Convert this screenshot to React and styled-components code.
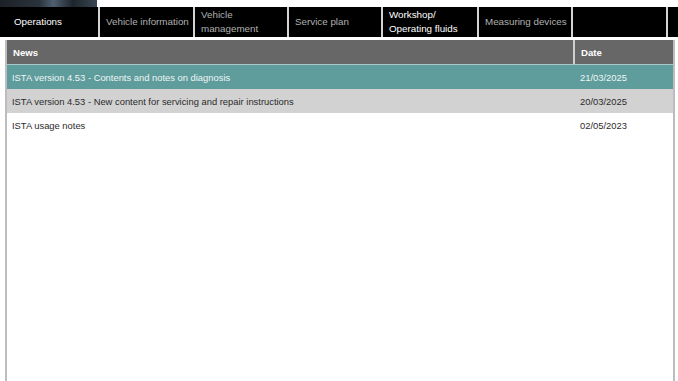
import React from 'react';
import styled, { createGlobalStyle } from 'styled-components';

const GlobalStyle = createGlobalStyle`
    html, body {
        margin: 0;
        padding: 0;
        background: #ffffff;
        font-family: 'Liberation Sans', Arial, sans-serif;
    }
`;

const Page = styled.div`
    width: 678px;
    height: 381px;
    overflow: hidden;
    background: #fff;
`;

const Banner = styled.div`
    height: 7px;
    display: flex;
`;

const BannerImage = styled.div`
    width: 97px;
    background: linear-gradient(90deg, #1c2127 0%, #2a323b 40%, #4f5f70 55%, #1e252c 75%, #3b4652 100%);
`;

const TabBar = styled.div`
    display: flex;
    height: 30px;
    background: #000;
`;

const Tab = styled.div`
    box-sizing: border-box;
    width: ${p => p.$w}px;
    flex: ${p => (p.$w ? 'none' : '1')};
    border-right: ${p => (p.$last ? 'none' : '2px solid #d4d4d4')};
    padding-left: ${p => p.$pad || 6}px;
    display: flex;
    align-items: center;
    font-size: 9.8px;
    line-height: 14px;
    white-space: nowrap;
    overflow: hidden;
    color: ${p => (p.$active ? '#ffffff' : '#b0b0b0')};
`;

const Panel = styled.div`
    margin: 3px 3px 0 5px;
    height: 400px;
    border-left: 2px solid #bdbdbd;
    border-right: 2px solid #bdbdbd;
    background: #fff;
`;

const Row = styled.div`
    display: grid;
    grid-template-columns: 1fr 100px;
    height: 24px;
    background: ${p => p.$bg};
    color: ${p => p.$fg || '#2b2b2b'};
    font-size: ${p => (p.$head ? 9.6 : 9.4)}px;
    font-weight: ${p => (p.$head ? 700 : 400)};
    border-bottom: ${p => (p.$head ? '1px solid #a9c9c9' : 'none')};
`;

const Cell = styled.div`
    display: flex;
    align-items: center;
    padding-left: ${p => p.$pad}px;
    border-left: ${p => (p.$divide ? '2px solid #cfcfcf' : 'none')};
    white-space: nowrap;
`;

const tabs = [
    { label: 'Operations', w: 100, active: true, pad: 14 },
    { label: 'Vehicle information', w: 95 },
    { label: <>Vehicle<br />management</>, w: 94 },
    { label: 'Service plan', w: 94 },
    { label: <>Workshop/<br />Operating fluids</>, w: 96, active: true },
    { label: 'Measuring devices', w: 94 },
    { label: '', w: 95 },
    { label: '', last: true }
];

const news = [
    { title: 'ISTA version 4.53 - Contents and notes on diagnosis', date: '21/03/2025', bg: '#5f9c9c', fg: '#eef6f6' },
    { title: 'ISTA version 4.53 - New content for servicing and repair instructions', date: '20/03/2025', bg: '#d2d2d2' },
    { title: 'ISTA usage notes', date: '02/05/2023', bg: '#ffffff' }
];

const App = () => (
    <Page>
        <GlobalStyle />
        <Banner>
            <BannerImage />
        </Banner>
        <TabBar>
            {tabs.map((t, i) => (
                <Tab key={i} $w={t.w} $active={t.active} $pad={t.pad} $last={t.last}>
                    <span>{t.label}</span>
                </Tab>
            ))}
        </TabBar>
        <Panel>
            <Row $head $bg="#676767" $fg="#ffffff">
                <Cell $pad={6}>News</Cell>
                <Cell $pad={6} $divide>Date</Cell>
            </Row>
            {news.map(n => (
                <Row key={n.title} $bg={n.bg} $fg={n.fg}>
                    <Cell $pad={5}>{n.title}</Cell>
                    <Cell $pad={7}>{n.date}</Cell>
                </Row>
            ))}
        </Panel>
    </Page>
);

export default App;
